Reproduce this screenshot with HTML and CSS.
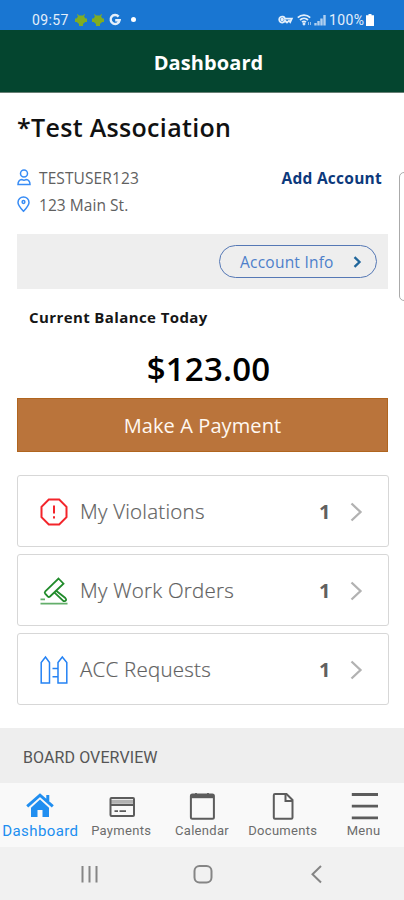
FILE: index.html
```html
<!DOCTYPE html>
<html lang="en">
<head>
<meta charset="utf-8">
<title>Dashboard</title>
<link rel="stylesheet" href="styles.css">
</head>
<body>
<div class="status">
  <span class="time">09:57</span>
  <svg class="droid" viewBox="0 0 12 12"><path d="M2.500 0l1.500 1.500h4L9.500 0l.5.500-1 2 1.500 2H12V8h-1.800L8 10v2H4v-2L1.800 8H0V4.500h1.500l1.500-2-1-2z"/></svg>
  <svg class="droid" viewBox="0 0 12 12"><path d="M2.500 0l1.500 1.500h4L9.500 0l.5.500-1 2 1.500 2H12V8h-1.800L8 10v2H4v-2L1.800 8H0V4.500h1.500l1.500-2-1-2z"/></svg>
  <svg class="google" viewBox="0 0 12 12"><path d="M9.600 2.600A4.500 4.500 0 1 0 10.600 6.300H6.200"/></svg>
  <i class="dot"></i>
  <span class="space"></span>
  <svg class="vpn" viewBox="0 0 15 9"><path d="M7 3.500A3 3 0 1 0 7 5.600L9 7.500l2-1.800 1.200 1.400 1.600-3.400H7z"/><circle cx="4.200" cy="4.500" r=".8"/></svg>
  <svg class="wifi" viewBox="0 0 15 12"><path d="M.8 3.600a9 9 0 0 1 12.400 0M3 6a6 6 0 0 1 8 0M5 8.200a3 3 0 0 1 4 0"/><path d="M11.500 8v3M13.500 8v3" class="thin"/><circle cx="7" cy="10" r=".6"/></svg>
  <svg class="signal" viewBox="0 0 12 12"><path d="M1.500 9v2.500M4.500 7v4.500M7.500 4.500v7M10.500 1v10.500"/></svg>
  <span class="charge">100%</span>
  <svg class="battery" viewBox="0 0 8 12"><path d="M2.500 0h3v1.200H8V12H0V1.200h2.500z"/></svg>
</div>
<header class="header"><h1>Dashboard</h1></header>
<main class="main">
  <section class="account">
    <h2>*Test Association</h2>
    <div class="line">
      <svg class="person" viewBox="0 0 14 17"><circle cx="7" cy="4.500" r="3.500"/><path d="M1 15.600c0-3 1.600-4.800 4-5 1.300.7 2.700.7 4 0 2.400.2 4 2 4 5z"/></svg>
      <span class="user">TESTUSER123</span>
      <a class="add">Add Account</a>
    </div>
    <div class="line">
      <svg class="pin" viewBox="0 0 14 17"><path d="M6.500.9a5.500 5.500 0 0 1 5.500 5.500c0 3-2.700 5.800-5.500 8.800C3.700 12.200 1 9.400 1 6.400A5.500 5.500 0 0 1 6.500.9z"/><circle cx="6.500" cy="6" r="1.400"/></svg>
      <span class="address">123 Main St.</span>
    </div>
  </section>
  <div class="info">
    <a class="pill"><span>Account Info</span><svg viewBox="0 0 8 12"><path d="M1.500 1.200l5 4.800-5 4.800"/></svg></a>
  </div>
  <section class="balance">
    <h3>Current Balance Today</h3>
    <p class="amount"><span>$123.00</span></p>
    <a class="pay"><span>Make A Payment</span></a>
  </section>
  <section class="cards">
    <a class="card">
      <svg class="red" viewBox="0 0 28 28"><path d="M8.800 1.500h10.400l7.300 7.300v10.400l-7.300 7.300H8.800l-7.300-7.300V8.800z"/><path class="bang" d="M14 7.500v8M14 18.200v2.300"/></svg>
      <span class="name">My Violations</span><b>1</b>
      <svg class="chev" viewBox="0 0 12 20"><path d="M1.500 1.500l9 8.500-9 8.500"/></svg>
    </a>
    <a class="card">
      <svg class="green" viewBox="0 0 28 28"><path d="M18.500 1.500l5 5.200L10 19.500q-1.200 1-2.300-.1l-2.500-2.800q-1-1.200.1-2.300zM16.800 14.300l8.500 6.700q1.700 2-.1 3-1.300.6-2.500-.7l-7.900-7.500"/><path class="base" d="M.5 22.300h4.500M.5 26.700h27"/></svg>
      <span class="name">My Work Orders</span><b>1</b>
      <svg class="chev" viewBox="0 0 12 20"><path d="M1.500 1.500l9 8.500-9 8.500"/></svg>
    </a>
    <a class="card">
      <svg class="blue" viewBox="0 0 28 28"><path d="M1.200 27V6.500L5.500 1l4 5.500V27zM18 27V6.500L22.300 1l4.500 5.500V27zM12.500 12.500H18M12.500 20.800H18"/></svg>
      <span class="name">ACC Requests</span><b>1</b>
      <svg class="chev" viewBox="0 0 12 20"><path d="M1.500 1.500l9 8.500-9 8.500"/></svg>
    </a>
  </section>
  <i class="peek"></i>
</main>
<section class="board"><span>BOARD OVERVIEW</span></section>
<nav class="tabs">
  <a class="tab active"><svg viewBox="0 0 28 28"><path class="fill" d="M14 7.500l9 8.200V25h-6.500v-7h-5v7H5v-9.300z"/><path class="roof" d="M1.200 14.300L14 3.200l12.800 11.100M21.800 3v6"/></svg><span>Dashboard</span></a>
  <a class="tab payments"><svg viewBox="0 0 28 28"><rect x="3.500" y="6" width="23.500" height="18" rx="1"/><path d="M3.500 9.800H27" class="band"/><path d="M3.500 13H27"/><path class="mini" d="M7.500 19.200h3.500M12.500 19.200h6.500"/></svg><span>Payments</span></a>
  <a class="tab calendar"><svg viewBox="0 0 28 28"><rect x="2.900" y="2.500" width="23" height="24.200" rx="1.500"/><path class="cap" d="M2.900 4.200h23"/><path class="mini" d="M8 1v3M20 1v3"/></svg><span>Calendar</span></a>
  <a class="tab documents"><svg viewBox="0 0 28 28"><path d="M6 2h11.500l6 6v17.500q0 1.200-1.200 1.200H6q-1.200 0-1.200-1.200V3.200Q4.800 2 6 2z"/><path class="fold" d="M16.500 2v7h7"/></svg><span>Documents</span></a>
  <a class="tab menu"><svg viewBox="0 0 28 28"><path class="bars" d="M1.800 2.500h26.200M1.800 14.200h26.200M1.800 25.800h26.200"/></svg><span>Menu</span></a>
</nav>
<footer class="system">
  <svg viewBox="0 0 20 20"><path d="M2.500 2v16.500M9.500 2v16.500M16.500 2v16.500"/></svg>
  <svg viewBox="0 0 20 20"><rect x="1.500" y="2" width="17" height="16.500" rx="5"/></svg>
  <svg viewBox="0 0 20 20"><path d="M15 2L6.500 10.200l8.500 8.300"/></svg>
</footer>
</body>
</html>
```
FILE: styles.css
```css
* { box-sizing: border-box; }
body { margin: 0; width: 404px; height: 900px; overflow: hidden; background: #fff; font-family: "Open Sans", sans-serif; color: #606060; }
h1, h2, h3, p { margin: 0; }
span, b, a, h1, h2, h3 { white-space: nowrap; }
svg { display: block; flex: none; fill: none; stroke: currentColor; overflow: visible; }
.status { height: 30px; padding: 9px 30px 0 32px; display: flex; align-items: center; background: #1976d2; color: #e4effa; font: 14px/20px Roboto, sans-serif; }
.time { width: 43px; letter-spacing: .4px; }
.droid { width: 12px; height: 12px; margin-right: 5px; fill: #80ad22; stroke: none; }
.google { width: 12px; height: 12px; stroke-width: 2.400; }
.dot { width: 5px; height: 5px; margin-left: 10px; border-radius: 50%; background: #fff; }
.space { flex: 1; }
.vpn { width: 15px; height: 9px; stroke-width: 1.800; margin-right: 4px; }
.wifi { width: 15px; height: 12px; stroke-width: 1.700; margin-right: 2px; }
.wifi .thin { stroke-width: 1; opacity: .6; }
.signal { width: 12px; height: 12px; stroke-width: 2.400; opacity: .75; margin-right: 3px; }
.charge { width: 37px; letter-spacing: .35px; }
.battery { width: 8px; height: 12px; fill: #fff; stroke: none; }
.header { height: 63px; display: flex; align-items: center; justify-content: center; background: #04452f; border-bottom: 1px solid #687f75; padding: 3px 0 0 13px; }
.header h1 { color: #fff; font-size: 20px; line-height: 28px; font-weight: 700; letter-spacing: .1px; }
.main { height: 635px; padding: 17px 16px 0 17px; position: relative; }
.account { height: 124px; }
.account h2 { font-size: 25px; line-height: 34px; font-weight: 600; color: #111; margin-bottom: 20px; letter-spacing: .32px; }
.line { display: flex; align-items: center; height: 27px; font-size: 15.500px; }
.line svg { width: 14px; height: 17px; color: #388cf5; stroke-width: 1.500; margin-right: 8px; }
.user { letter-spacing: .1px; }
.address { letter-spacing: .05px; }
.add { margin-left: auto; margin-right: 6px; font-weight: 700; color: #0c397c; letter-spacing: .25px; }
.info { height: 55px; padding: 11px 11px 0 0; background: #eee; display: flex; justify-content: flex-end; }
.pill { width: 158px; height: 33px; border: 1px solid #5578b5; border-radius: 17px; padding: 0 15px 0 20px; display: flex; align-items: center; justify-content: space-between; color: #4d7fca; font-size: 15.500px; letter-spacing: .23px; }
.pill svg { width: 8px; height: 12px; color: #20669b; stroke-width: 2.300; }
.balance { height: 162px; padding-top: 17px; }
.balance h3 { padding-left: 12px; font-size: 15px; line-height: 22px; font-weight: 700; color: #161616; letter-spacing: .4px; }
.amount { height: 70px; padding: 19px 0 0 12px; text-align: center; font-size: 33px; line-height: 44px; font-weight: 600; color: #000; letter-spacing: .2px; }
.pay { height: 54px; display: flex; align-items: center; justify-content: center; background: #ba743b; border: 1px solid #b0651f; color: #fff8f0; font-size: 20px; letter-spacing: .1px; }
.cards { padding-top: 24px; display: grid; gap: 7px; margin-right: -1px; }
.card { height: 72px; border: 1px solid #d7d7d7; border-radius: 3px; padding: 1px 26px 0 22px; display: flex; align-items: center; color: #606060; }
.card svg { width: 28px; height: 28px; stroke-width: 1.500; margin-right: 12px; }
.card .red { color: #f3252b; stroke-width: 2; }
.card .green { color: #218b2b; stroke-width: 1.800; }
.card .blue { color: #2482f4; }
.base { opacity: .7; }
.name { padding-bottom: 2px; font-size: 20.500px; flex: 1; font-weight: 300; letter-spacing: .24px; -webkit-text-stroke: .2px #606060; }
.card b { font-size: 20px; width: 31px; font-weight: 700; }
.card .chev { width: 12px; height: 20px; color: #b2b2b2; stroke-width: 2.300; margin: 0; }
.peek { position: absolute; left: 399px; top: 79px; width: 12px; height: 129px; border: 1px solid #aaa; border-radius: 5px; background: #fff; }
.board { height: 55px; padding: 3px 0 0 23px; display: flex; align-items: center; background: #eee; color: #555; font: 16px Roboto, sans-serif; letter-spacing: .1px; }
.tabs { height: 64px; display: grid; grid-template-columns: repeat(5, 1fr); background: #f9f9f9; }
.tab { display: flex; flex-direction: column; align-items: center; padding-top: 9px; color: #6c6c6c; font: 13px/20px Roboto, sans-serif; letter-spacing: .3px; }
.tab svg { width: 28px; height: 28px; stroke-width: 2; margin-bottom: 1px; color: #5c5c5c; }
.tab.active { color: #208ef0; font-size: 15px; letter-spacing: .4px; }
.tab.active svg { color: #208ef0; }
.fill { fill: currentColor; stroke: none; }
.roof { stroke-width: 3; }
.band { stroke-width: 4; opacity: .45; }
.mini { stroke-width: 1.800; }
.cap { stroke-width: 4; }
.bars { stroke-width: 2.800; }
.system { height: 53px; display: flex; align-items: center; justify-content: space-between; padding: 1px 78px 0 80px; background: #f1f1f1; color: #858585; }
.system svg { width: 20px; height: 20px; stroke-width: 2; }
```
